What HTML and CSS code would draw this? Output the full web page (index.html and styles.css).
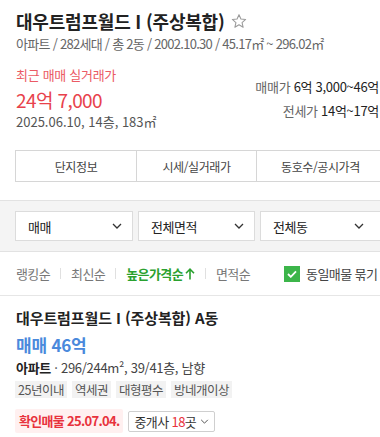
FILE: index.html
```html
<!DOCTYPE html>
<html lang="ko">
<head>
<meta charset="utf-8">
<link rel="stylesheet" href="styles.css">
</head>
<body>
<div class="page">
  <section class="head">
    <h1 class="title">대우트럼프월드 I (주상복합)
      <svg class="star" width="16" height="16" viewBox="0 0 24 24"><path d="M12 2.5l2.9 6.6 7.1.6-5.4 4.7 1.6 7-6.2-3.7-6.2 3.7 1.6-7L2 9.7l7.1-.6z" fill="none" stroke="#9a9a9a" stroke-width="1.6" stroke-linejoin="round"/></svg>
    </h1>
    <p class="meta">아파트 / 282세대 / 총 2동 / 2002.10.30 / 45.17㎡ ~ 296.02㎡</p>
    <div class="summary">
      <div class="recent">
        <div class="recent-label">최근 매매 실거래가</div>
        <div class="recent-price">24억 7,000</div>
        <div class="recent-date">2025.06.10, 14층, 183㎡</div>
      </div>
      <div class="ranges">
        <div class="range"><span class="range-label">매매가</span> <span class="range-val">6억 3,000~46억</span></div>
        <div class="range"><span class="range-label">전세가</span> <span class="range-val">14억~17억</span></div>
      </div>
    </div>
    <div class="tabs">
      <div class="tab">단지정보</div>
      <div class="tab">시세/실거래가</div>
      <div class="tab">동호수/공시가격</div>
    </div>
  </section>

  <section class="filters">
    <div class="select">매매<svg class="chev" width="10" height="6" viewBox="0 0 10 6"><path d="M1 1l4 4 4-4" fill="none" stroke="#333" stroke-width="1.3"/></svg></div>
    <div class="select">전체면적<svg class="chev" width="10" height="6" viewBox="0 0 10 6"><path d="M1 1l4 4 4-4" fill="none" stroke="#333" stroke-width="1.3"/></svg></div>
    <div class="select">전체동<svg class="chev" width="10" height="6" viewBox="0 0 10 6"><path d="M1 1l4 4 4-4" fill="none" stroke="#333" stroke-width="1.3"/></svg></div>
  </section>

  <nav class="sort">
    <span class="sort-item">랭킹순</span><span class="sep"></span>
    <span class="sort-item">최신순</span><span class="sep"></span>
    <span class="sort-item active">높은가격순<svg class="arrow" width="10" height="12" viewBox="0 0 10 12"><path d="M5 11.5V1.5M1 5.2L5 1.2l4 4" fill="none" stroke="#2aa12f" stroke-width="1.6"/></svg></span><span class="sep"></span>
    <span class="sort-item">면적순</span>
    <label class="check"><span class="box"><svg width="10" height="8" viewBox="0 0 10 8"><path d="M1 4l2.8 2.8L9 1.4" fill="none" stroke="#fff" stroke-width="1.8"/></svg></span>동일매물 묶기</label>
  </nav>

  <article class="item">
    <h2 class="item-title">대우트럼프월드 I (주상복합) A동</h2>
    <div class="item-price">매매 46억</div>
    <div class="item-spec"><b>아파트</b> · 296/244m², 39/41층, 남향</div>
    <div class="tags">
      <span class="tag">25년이내</span>
      <span class="tag">역세권</span>
      <span class="tag">대형평수</span>
      <span class="tag">방네개이상</span>
    </div>
    <div class="actions">
      <span class="confirm">확인매물 25.07.04.</span>
      <span class="broker">중개사 <em>18</em>곳<svg class="chev-s" width="9" height="5" viewBox="0 0 10 6"><path d="M1 1l4 4 4-4" fill="none" stroke="#555" stroke-width="1.2"/></svg></span>
    </div>
  </article>
</div>
</body>
</html>
```

FILE: styles.css
```css
html, body {
  margin: 0;
  padding: 0;
  background: #fff;
  overflow: hidden;
}
body {
  font-family: "Noto Sans CJK KR", "Noto Sans", sans-serif;
  color: #222;
  width: 380px;
}
.page {
  width: 400px;
}
.head {
  padding: 9px 15px 0 16px;
}
.title {
  margin: 0;
  font-size: 18px;
  line-height: 24px;
  font-weight: 700;
  letter-spacing: -0.2px;
  display: flex;
  align-items: center;
  gap: 6px;
}
.star {
  margin-top: -1px;
}
.meta {
  margin: 2px 0 0;
  font-size: 13px;
  line-height: 18px;
  color: #666;
  letter-spacing: -0.72px;
}
.summary {
  display: flex;
  justify-content: space-between;
  margin-top: 13px;
  padding-right: 6px;
}
.recent-label {
  font-size: 13px;
  line-height: 18px;
  color: #eb5a64;
  letter-spacing: -0.3px;
}
.recent-price {
  margin-top: 3px;
  font-size: 19px;
  line-height: 26px;
  color: #e8424c;
  letter-spacing: -0.6px;
}
.recent-date {
  font-size: 13px;
  line-height: 18px;
  color: #555;
  letter-spacing: 0;
}
.ranges {
  margin-top: 11px;
  display: flex;
  flex-direction: column;
  align-items: flex-end;
  gap: 4px;
}
.range {
  font-size: 13px;
  line-height: 20px;
  letter-spacing: -0.3px;
}
.range-label {
  color: #666;
}
.range-val {
  color: #222;
}
.tabs {
  margin-top: 19px;
  display: grid;
  grid-template-columns: 120px 120px 1fr;
  border: 1px solid #d6d6d6;
  margin-left: -1px;
}
.tab {
  height: 30px;
  display: flex;
  align-items: center;
  justify-content: center;
  font-size: 12px;
  color: #444;
  letter-spacing: -0.4px;
  border-left: 1px solid #d6d6d6;
}
.tab:first-child {
  border-left: none;
}
.filters {
  margin-top: 18px;
  background: #f4f4f4;
  border-top: 1px solid #e2e2e2;
  border-bottom: 1px solid #e2e2e2;
  padding: 10px 15px;
  display: grid;
  grid-template-columns: 118px 117px 1fr;
  gap: 5px;
}
.select {
  height: 28px;
  background: #fff;
  border: 1px solid #dcdcdc;
  display: flex;
  align-items: center;
  justify-content: space-between;
  padding: 0 10px 0 12px;
  font-size: 13px;
  color: #222;
  letter-spacing: -0.5px;
}
.select:last-child .chev {
  margin-right: 10px;
}
.sort {
  height: 43px;
  border-bottom: 1px solid #e6e6e6;
  display: flex;
  align-items: center;
  padding-left: 16px;
  font-size: 13px;
  letter-spacing: -0.6px;
}
.sort-item {
  color: #777;
  display: flex;
  align-items: center;
}
.sort-item.active {
  color: #2aa12f;
  font-weight: 700;
}
.arrow {
  margin-left: 2px;
}
.sep {
  width: 1px;
  height: 11px;
  background: #e0e0e0;
  margin: 0 10px;
}
.check {
  margin-left: 34px;
  display: flex;
  align-items: center;
  gap: 6px;
  color: #444;
  white-space: nowrap;
}
.box {
  width: 16px;
  height: 16px;
  background: #3cb54a;
  display: flex;
  align-items: center;
  justify-content: center;
}
.item {
  padding: 12px 15px 0 16px;
}
.item-title {
  margin: 0;
  font-size: 15px;
  line-height: 20px;
  font-weight: 700;
  letter-spacing: -0.1px;
}
.item-price {
  margin-top: 5px;
  font-size: 17px;
  line-height: 24px;
  font-weight: 700;
  color: #4a89dc;
  letter-spacing: -0.2px;
}
.item-spec {
  margin-top: 2px;
  font-size: 13px;
  line-height: 18px;
  color: #444;
  letter-spacing: -0.3px;
}
.item-spec b {
  color: #222;
}
.tags {
  margin-top: 4px;
  display: flex;
  gap: 5px;
  margin-left: -1px;
}
.tag {
  background: #f2f2f2;
  color: #555;
  font-size: 12.5px;
  line-height: 17px;
  padding: 0 3px;
  letter-spacing: -0.5px;
}
.actions {
  margin-top: 11px;
  display: flex;
  align-items: center;
  gap: 5px;
  margin-left: -1px;
}
.confirm {
  background: #fff0f0;
  color: #e8323c;
  font-weight: 700;
  font-size: 13px;
  line-height: 24px;
  padding: 0 4px;
  letter-spacing: -0.7px;
  border-radius: 2px;
}
.broker {
  border: 1px solid #cfcfcf;
  border-radius: 2px;
  font-size: 13px;
  line-height: 19px;
  padding: 0 5px;
  color: #333;
  letter-spacing: -0.6px;
  display: flex;
  align-items: center;
}
.broker em {
  font-style: normal;
  color: #e8323c;
  margin-left: 3px;
}
.chev-s {
  margin-left: 4px;
}
```
